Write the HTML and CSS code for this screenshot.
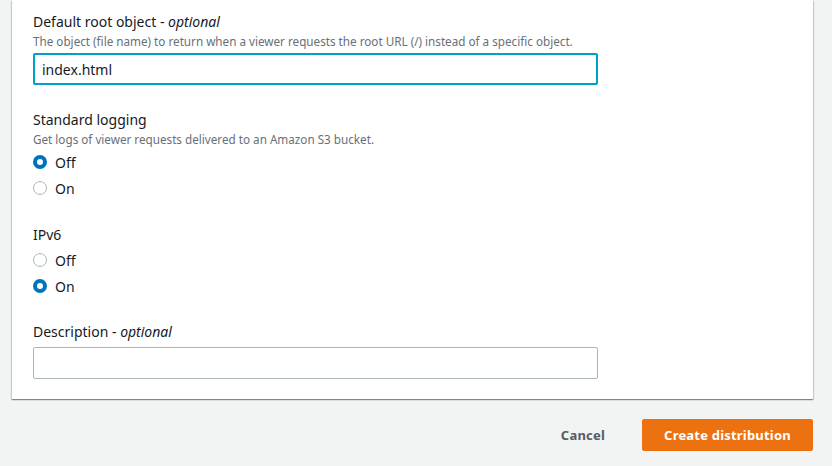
FILE: index.html
```html
<!DOCTYPE html>
<html lang="en">
<head>
<meta charset="utf-8">
<title>Distribution settings</title>
<link rel="stylesheet" href="styles.css">
</head>
<body>
<div class="page">
  <section class="card">
    <div class="field field-first">
      <label class="label" for="root">Default root object - <i>optional</i></label>
      <div class="desc">The object (file name) to return when a viewer requests the root URL (/) instead of a specific object.</div>
      <input class="input focused" id="root" type="text" value="index.html">
    </div>

    <div class="field">
      <div class="label">Standard logging</div>
      <div class="desc">Get logs of viewer requests delivered to an Amazon S3 bucket.</div>
      <div class="radios">
        <div class="radio"><span class="dot checked"></span><span>Off</span></div>
        <div class="radio"><span class="dot"></span><span>On</span></div>
      </div>
    </div>

    <div class="field">
      <div class="label">IPv6</div>
      <div class="radios radios-tight">
        <div class="radio"><span class="dot"></span><span>Off</span></div>
        <div class="radio"><span class="dot checked"></span><span>On</span></div>
      </div>
    </div>

    <div class="field field-last">
      <label class="label" for="desc">Description - <i>optional</i></label>
      <input class="input" id="desc" type="text" value="">
    </div>
  </section>

  <div class="actions">
    <button class="btn-link" type="button">Cancel</button>
    <button class="btn-primary" type="button">Create distribution</button>
  </div>
</div>
</body>
</html>
```

FILE: styles.css
```css
* { box-sizing: border-box; }

html, body {
  margin: 0;
  padding: 0;
  background: #f2f3f3;
  font-family: "Noto Sans", "Open Sans", sans-serif;
  color: #16191f;
}

.page {
  padding: 0 19px 0 12px;
}

.card {
  background: #ffffff;
  border-top: none;
  padding: 11px 20px 20px 21px;
  box-shadow: 0 1px 1px 0 rgba(0, 28, 36, 0.3), 1px 1px 1px 0 rgba(0, 28, 36, 0.15), -1px 1px 1px 0 rgba(0, 28, 36, 0.15);
  display: flex;
  flex-direction: column;
  gap: 23px;
}

.field {
  display: flex;
  flex-direction: column;
}

.field-first {
  margin-bottom: 1px;
}

.field-last {
  margin-top: -1px;
}

.label {
  font-size: 14px;
  line-height: 22px;
  color: #16191f;
}

.label i {
  font-style: italic;
}

.desc {
  font-size: 11.7px;
  line-height: 16px;
  color: #687078;
}

.input {
  margin-top: 4px;
  width: 565px;
  height: 32px;
  border: 1px solid #aab7b8;
  border-radius: 2px;
  background: #fff;
  padding: 0 8px;
  font-family: inherit;
  font-size: 14px;
  color: #16191f;
  outline: none;
}

.input.focused {
  border: 2px solid #00a1c9;
  padding: 0 7px;
}

.radios {
  display: flex;
  flex-direction: column;
  margin-top: 2px;
}

.radios-tight {
  margin-top: 1px;
}

.radio {
  display: flex;
  align-items: center;
  gap: 8px;
  height: 26px;
  font-size: 14px;
}

.dot {
  width: 14px;
  height: 14px;
  border-radius: 50%;
  border: 1.5px solid #aab7b8;
  background: #fff;
  flex: none;
}

.dot.checked {
  border: 4.5px solid #0073bb;
  background: #fff;
}

.actions {
  display: flex;
  justify-content: flex-end;
  align-items: center;
  gap: 17px;
  padding-top: 20px;
}

.btn-link,
.btn-primary {
  font-family: inherit;
  font-size: 13px;
  font-weight: 700;
  height: 32px;
  border-radius: 2px;
  cursor: pointer;
  letter-spacing: 0.2px;
}

.btn-link {
  background: transparent;
  border: none;
  color: #545b64;
  padding: 0 20px;
}

.btn-primary {
  background: #ec7211;
  border: 1px solid #ec7211;
  color: #ffffff;
  padding: 0 20px;
  width: 171px;
}
```
